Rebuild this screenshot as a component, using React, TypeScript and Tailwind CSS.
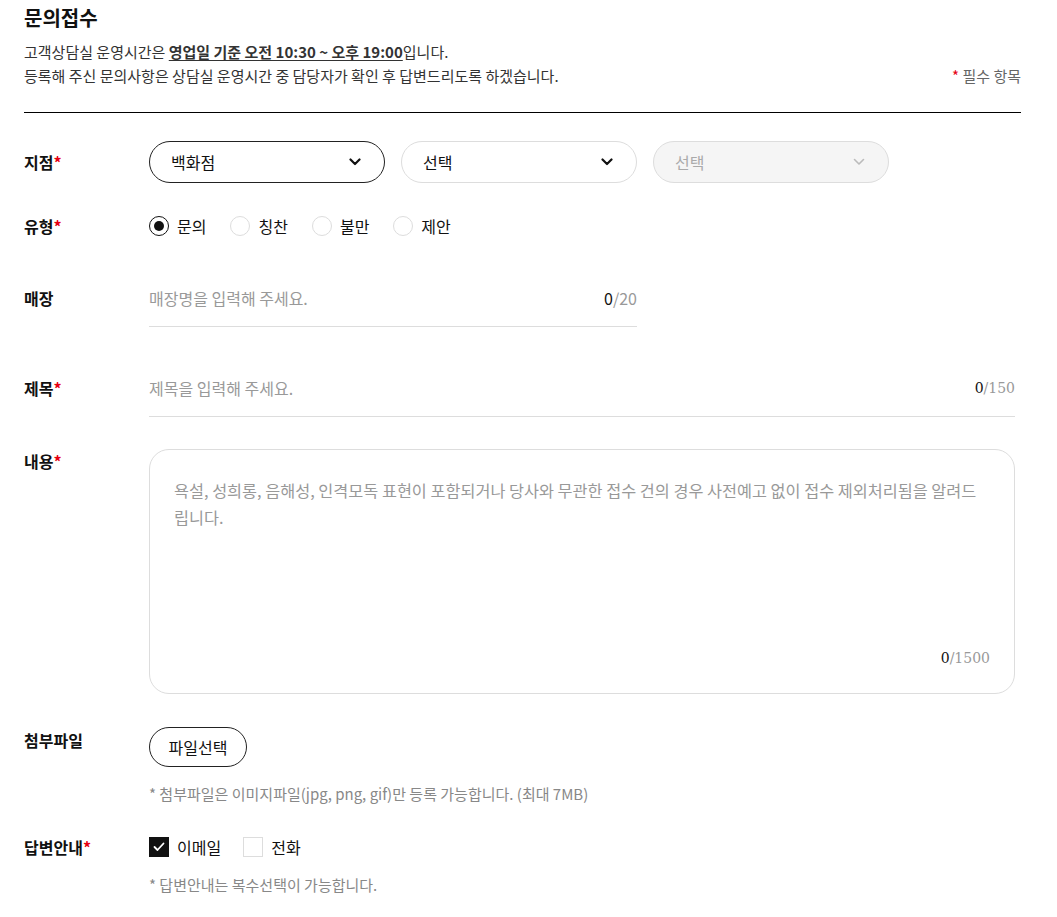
import type { ReactNode } from "react";

const labelClass = "w-[125px] shrink-0 text-[16px] font-bold leading-6 text-[#111]";

function Label({ text, required }: { text: string; required?: boolean }) {
  return (
    <div className={labelClass}>
      {text}
      {required && <span className="text-[#e60012]">*</span>}
    </div>
  );
}

function Chevron({ muted }: { muted?: boolean }) {
  return (
    <svg width="12" height="8" viewBox="0 0 12 8" fill="none">
      <polyline
        points="1.5,1.5 6,6 10.5,1.5"
        stroke={muted ? "#bbb" : "#111"}
        strokeWidth={muted ? 1.6 : 2.2}
        strokeLinecap="round"
        strokeLinejoin="round"
      />
    </svg>
  );
}

function Select({
  value,
  active,
  disabled,
}: {
  value: string;
  active?: boolean;
  disabled?: boolean;
}) {
  const tone = disabled
    ? "border-[#ddd] bg-[#f5f5f5] text-[#aaa]"
    : active
      ? "border-[#222] bg-white text-[#111]"
      : "border-[#ddd] bg-white text-[#111]";
  return (
    <div
      className={`flex h-[42px] w-[236px] items-center justify-between rounded-full border pl-[21px] pr-[23px] text-[16px] ${tone}`}
    >
      <span>{value}</span>
      <Chevron muted={disabled} />
    </div>
  );
}

function Radio({ label, checked }: { label: string; checked?: boolean }) {
  return (
    <label className="flex items-center gap-2 text-[16px] leading-5 text-[#111]">
      <span
        className={`flex size-5 items-center justify-center rounded-full border ${
          checked ? "border-[1.5px] border-[#111]" : "border-[#ddd]"
        }`}
      >
        {checked && <span className="size-[10px] rounded-full bg-[#111]" />}
      </span>
      {label}
    </label>
  );
}

function Checkbox({ label, checked }: { label: string; checked?: boolean }) {
  return (
    <label className="flex items-center gap-2 text-[16px] leading-5 text-[#111]">
      <span
        className={`flex size-5 items-center justify-center border ${
          checked ? "border-[#111] bg-[#111]" : "border-[#ddd] bg-white"
        }`}
      >
        {checked && (
          <svg width="12" height="10" viewBox="0 0 12 10" fill="none">
            <polyline
              points="1.5,5 4.5,8 10.5,1.5"
              stroke="#fff"
              strokeWidth="1.8"
              strokeLinecap="round"
              strokeLinejoin="round"
            />
          </svg>
        )}
      </span>
      {label}
    </label>
  );
}

function Counter({ max, serif }: { max: number; serif?: boolean }) {
  return (
    <span
      className={`shrink-0 leading-6 ${
        serif ? "font-['DejaVu_Serif',serif] text-[14px]" : "text-[16px]"
      }`}
    >
      <span className="text-[#111]">0</span>
      <span className="text-[#999]">/{max}</span>
    </span>
  );
}

function TextField({
  placeholder,
  max,
  width,
  serif,
}: {
  placeholder: string;
  max: number;
  width: string;
  serif?: boolean;
}) {
  return (
    <div className={`flex items-center border-b border-[#ddd] pb-4 ${width}`}>
      <input
        className="min-w-0 flex-1 bg-transparent text-[16px] leading-6 text-[#111] outline-none placeholder:text-[#999]"
        placeholder={placeholder}
      />
      <Counter max={max} serif={serif} />
    </div>
  );
}

function Note({ children }: { children: ReactNode }) {
  return <p className="pl-[125px] text-[15px] leading-6 text-[#888]">{children}</p>;
}

export default function App() {
  return (
    <div className="min-h-screen bg-white pb-6 pl-6 pr-9 font-['Noto_Sans_CJK_KR','Noto_Sans',sans-serif] text-[#222]">
      <h2 className="pt-[5px] text-[20px] font-bold leading-[26px] text-[#111]">문의접수</h2>

      <div className="mt-[9px] text-[15px] leading-6 text-[#333]">
        <p>
          고객상담실 운영시간은{" "}
          <span className="font-bold underline underline-offset-2">
            영업일 기준 오전 10:30 ~ 오후 19:00
          </span>
          입니다.
        </p>
        <div className="flex items-center justify-between">
          <p>등록해 주신 문의사항은 상담실 운영시간 중 담당자가 확인 후 답변드리도록 하겠습니다.</p>
          <p className="text-[#666]">
            <span className="text-[#e60012]">*</span> 필수 항목
          </p>
        </div>
      </div>

      <div className="mt-6 border-t border-black" />

      <div className="mt-[28px] flex items-center">
        <Label text="지점" required />
        <div className="flex gap-4">
          <Select value="백화점" active />
          <Select value="선택" />
          <Select value="선택" disabled />
        </div>
      </div>

      <div className="mt-[33px] flex h-5 items-center">
        <Label text="유형" required />
        <div className="flex gap-[24px]">
          <Radio label="문의" checked />
          <Radio label="칭찬" />
          <Radio label="불만" />
          <Radio label="제안" />
        </div>
      </div>

      <div className="mt-[50px] flex items-start">
        <Label text="매장" />
        <TextField placeholder="매장명을 입력해 주세요." max={20} width="w-[488px]" />
      </div>

      <div className="mt-[49px] flex items-start">
        <Label text="제목" required />
        <TextField placeholder="제목을 입력해 주세요." max={150} width="w-[866px]" serif />
      </div>

      <div className="mt-8 flex items-start">
        <Label text="내용" required />
        <div className="flex h-[245px] w-[866px] flex-col rounded-[20px] border border-[#ddd] px-6 pb-[23px] pt-[27px]">
          <textarea
            className="flex-1 resize-none bg-transparent text-[16.3px] leading-[27px] text-[#111] outline-none placeholder:text-[#999]"
            placeholder="욕설, 성희롱, 음해성, 인격모독 표현이 포함되거나 당사와 무관한 접수 건의 경우 사전예고 없이 접수 제외처리됨을 알려드립니다."
          />
          <div className="text-right">
            <Counter max={1500} serif />
          </div>
        </div>
      </div>

      <div className="mt-[33px] flex items-start">
        <div className="pt-px">
          <Label text="첨부파일" />
        </div>
        <button className="h-10 w-[98px] rounded-full border border-[#222] text-[16px] text-[#111]">
          파일선택
        </button>
      </div>
      <div className="mt-[15px]">
        <Note>* 첨부파일은 이미지파일(jpg, png, gif)만 등록 가능합니다. (최대 7MB)</Note>
      </div>

      <div className="mt-[29px] flex h-6 items-center">
        <Label text="답변안내" required />
        <div className="flex gap-[22px]">
          <Checkbox label="이메일" checked />
          <Checkbox label="전화" />
        </div>
      </div>
      <div className="mt-[14px]">
        <Note>* 답변안내는 복수선택이 가능합니다.</Note>
      </div>
    </div>
  );
}
